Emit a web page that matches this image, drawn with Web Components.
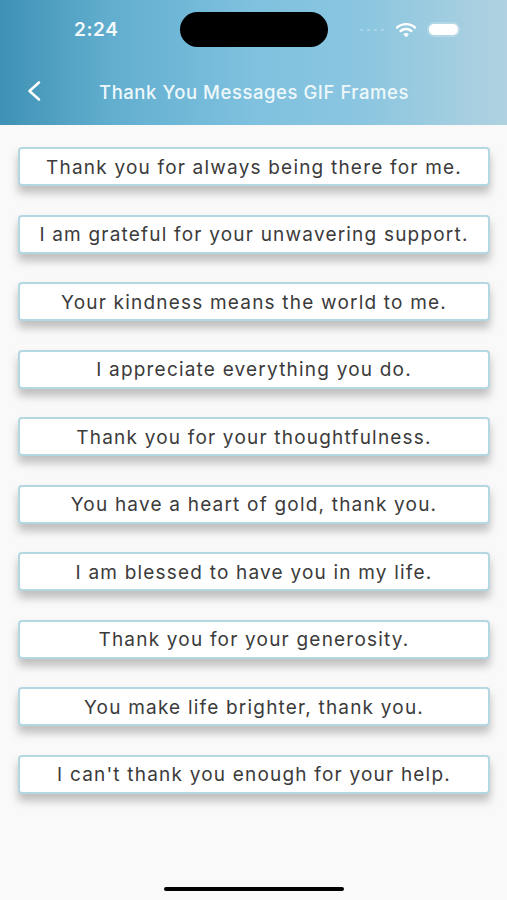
<!DOCTYPE html>
<html>
<head>
<meta charset="utf-8">
<title>Thank You Messages GIF Frames</title>
<style>
  html, body { margin: 0; height: 100%; }
  body { background: #f9f9f9; font-family: "Inter", "Liberation Sans", sans-serif; }
  app-screen { height: 900px; }
</style>
</head>
<body>
<template id="status-tpl">
  <style>
    :host { display: flex; align-items: center; height: 35px; padding-top: 12px; color: #f4fafc; }
    .time { width: 180px; box-sizing: border-box; padding-left: 74px; font: 600 19px "Inter", sans-serif; letter-spacing: .6px; }
    .island { width: 148px; height: 35px; border-radius: 18px; background: #000; }
    .right { flex: 1; display: flex; align-items: center; padding-left: 32px; }
    .dots { display: flex; gap: 4px; margin-right: 11px; }
    .dots i { width: 3px; height: 2px; border-radius: 50%; background: rgba(255,255,255,.3); }
    .batt { margin-left: 12px; width: 29px; height: 11px; border-radius: 5px; background: #fff; box-shadow: 0 0 0 2px rgba(255,255,255,.22); }
  </style>
  <span class="time">2:24</span>
  <div class="island"></div>
  <div class="right">
    <span class="dots"><i></i><i></i><i></i><i></i></span>
    <svg width="22" height="16" viewBox="0 0 22 16" fill="none" stroke="#fff" stroke-width="2.4" stroke-linecap="round">
      <path d="M2 5.6C7 1 15 1 20 5.6"/>
      <path d="M5.6 9C8.6 6.3 13.4 6.3 16.4 9"/>
      <path d="M11 14.6L8.9 12.2C10.1 11.2 11.9 11.2 13.1 12.2Z" fill="#fff" stroke-width="1"/>
    </svg>
    <span class="batt"></span>
  </div>
</template>

<template id="bar-tpl">
  <style>
    :host { display: block; height: 125px; box-sizing: border-box; background: linear-gradient(90deg, #3f92b5 0%, #62aecf 22%, #7fc1df 50%, #8bc6e0 72%, #b0d2e0 100%); }
    nav { display: flex; align-items: center; height: 32px; margin-top: 29px; }
    .back { width: 99px; box-sizing: border-box; padding-left: 26px; display: flex; margin-top: -2px; }
    .title { font: 500 18.5px "Inter", sans-serif; letter-spacing: .55px; color: #eef8fb; white-space: nowrap; }
  </style>
  <status-bar></status-bar>
  <nav>
    <span class="back">
      <svg width="16" height="22" viewBox="0 0 16 22" fill="none" stroke="#fff" stroke-width="2.6" stroke-linecap="round" stroke-linejoin="round"><path d="M13 2.5L3.5 11L13 19.5"/></svg>
    </span>
    <span class="title"><slot></slot></span>
  </nav>
</template>

<template id="msg-tpl">
  <style>
    :host { display: block; }
    button {
      display: block; width: 100%; height: 39px; padding: 1px 0 0; box-sizing: border-box;
      background: #fff; border: 2px solid #b4d7e2; border-radius: 4px;
      box-shadow: 0 7px 9px rgba(90,90,90,.36);
      font: 400 19px "Inter", sans-serif; letter-spacing: 1.2px; color: #3b3b3b; text-align: center;
    }
  </style>
  <button><slot></slot></button>
</template>

<template id="list-tpl">
  <style>
    :host { display: flex; flex-direction: column; gap: 28.5px; padding: 22px 17px 0 18px; }
  </style>
  <slot></slot>
</template>

<template id="screen-tpl">
  <style>
    :host { display: flex; flex-direction: column; background: #f9f9f9; }
    .fill { flex: 1; }
    .home { align-self: center; width: 180px; height: 4px; border-radius: 2px; background: #000; margin-bottom: 9px; }
  </style>
  <slot></slot>
  <div class="fill"></div>
  <div class="home"></div>
</template>

<app-screen>
  <app-bar>Thank You Messages GIF Frames</app-bar>
  <message-list>
    <message-item>Thank you for always being there for me.</message-item>
    <message-item>I am grateful for your unwavering support.</message-item>
    <message-item>Your kindness means the world to me.</message-item>
    <message-item>I appreciate everything you do.</message-item>
    <message-item>Thank you for your thoughtfulness.</message-item>
    <message-item>You have a heart of gold, thank you.</message-item>
    <message-item>I am blessed to have you in my life.</message-item>
    <message-item>Thank you for your generosity.</message-item>
    <message-item>You make life brighter, thank you.</message-item>
    <message-item>I can't thank you enough for your help.</message-item>
  </message-list>
</app-screen>

<script>
  // every element just clones its own template into an open shadow root
  function define(name, tplId) {
    customElements.define(name, class extends HTMLElement {
      constructor() {
        super();
        this.attachShadow({ mode: 'open' });
        this.shadowRoot.appendChild(document.getElementById(tplId).content.cloneNode(true));
      }
    });
  }
  define('status-bar', 'status-tpl');
  define('app-bar', 'bar-tpl');
  define('message-item', 'msg-tpl');
  define('message-list', 'list-tpl');
  define('app-screen', 'screen-tpl');
</script>
</body>
</html>
